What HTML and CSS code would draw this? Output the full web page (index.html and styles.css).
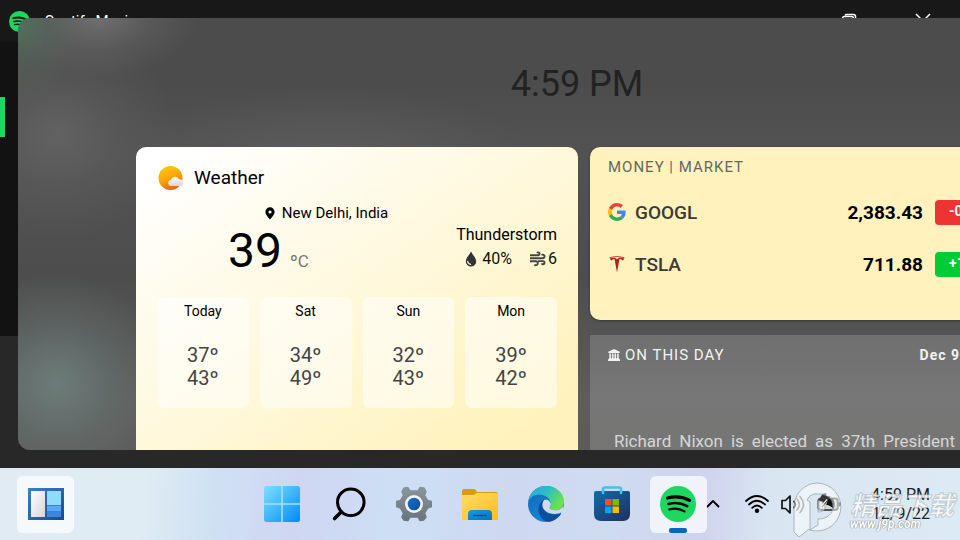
FILE: index.html
```html
<!DOCTYPE html>
<html lang="en">
<head>
<meta charset="utf-8">
<title>Widgets</title>
<link rel="stylesheet" href="styles.css">
</head>
<body>
<div class="desktop">
  <section class="app">
    <header class="app-title">
      <svg class="app-logo" viewBox="0 0 36 36"><circle cx="18" cy="18" r="18" fill="#1ed760"/><g fill="none" stroke="#121212" stroke-linecap="round"><path d="M7.5 12.2c7-1.9 15.500-1.200 22 2.400" stroke-width="3.400"/><path d="M8.500 18c6-1.600 13-.9 18.700 2.300" stroke-width="2.800"/><path d="M9.300 23.500c5-1.300 10.500-.7 15.200 2" stroke-width="2.300"/></g></svg>
      <span class="app-name">Spotify Music</span>
      <svg class="win-icon" viewBox="0 0 16 16"><rect x="1.500" y="3.500" width="11" height="11" rx="2"/><path d="M4 2.500Q4.500 1.500 6 1.500h6.500q2 0 2 2V10q0 1.500-1 2"/></svg>
      <svg class="win-icon" viewBox="0 0 16 16"><path d="M1 1l14 14M15 1L1 15"/></svg>
    </header>
    <div class="app-side"><i class="marker"></i></div>
    <div class="app-player"></div>
  </section>

  <main class="panel">
    <div class="board">
      <div class="time">4:59 PM</div>
      <div class="cards">
        <article class="weather">
          <header class="weather-head">
            <svg class="sun" viewBox="0 0 26 26"><defs><linearGradient id="sun" x1="0.3" y1="0" x2="0.7" y2="1"><stop offset="0" stop-color="#ffc80a"/><stop offset="0.5" stop-color="#fba40d"/><stop offset="1" stop-color="#e8590c"/></linearGradient><linearGradient id="cloud" x1="0" y1="0" x2="0" y2="1"><stop offset="0" stop-color="#fbfbfb"/><stop offset="1" stop-color="#d5d8dc"/></linearGradient></defs><circle cx="12.500" cy="13" r="12" fill="url(#sun)"/><path d="M13.500 21a3 3 0 0 1-.5-6q.8-3 4-3.200 2.800 0 4 2.500a3.300 3.300 0 0 1 1.500 6.700z" fill="url(#cloud)"/></svg>
            <h2>Weather</h2>
          </header>
          <p class="place"><svg class="pin" viewBox="0 0 10 13"><path fill-rule="evenodd" d="M5 .3A4.600 4.600 0 0 1 9.600 5C9.600 7.500 7.500 9.500 5 12.500 2.500 9.500.4 7.500.4 5A4.600 4.600 0 0 1 5 .3zM5 3.400a1.600 1.600 0 1 0 0 3.200 1.600 1.600 0 0 0 0-3.200z"/></svg>New Delhi, India</p>
          <div class="now">
            <div class="temp">39<span class="unit">ºC</span></div>
            <div class="state">
              <p>Thunderstorm</p>
              <p class="air">
                <svg class="drop" viewBox="0 0 12 16"><path d="M6 .6C7.500 4 11.200 6.800 11.200 10.400a5.200 5.200 0 0 1-10.400 0C.8 6.800 4.500 4 6 .6z" fill="#333"/><path d="M2.600 10.300q.3 2.800 3 3" fill="none" stroke="#fff6d8" stroke-width="1.200" stroke-linecap="round"/></svg>40%
                <svg class="wind" viewBox="0 0 16 16"><g fill="none" stroke="#444" stroke-width="1.900"><path d="M0 4.200h8.300a1.400 1.400 0 1 0-1.300-2.200"/><path d="M0 7.200h13a1.800 1.800 0 1 0-1.500-3.100"/><path d="M0 10.200h6a2 2 0 1 1-1.600 3.400"/><path d="M8 10.100h5a1.600 1.600 0 1 1-1.500 2.300"/></g></svg>6
              </p>
            </div>
          </div>
          <ul class="days">
            <li><b>Today</b><span>37º</span><span>43º</span></li>
            <li><b>Sat</b><span>34º</span><span>49º</span></li>
            <li><b>Sun</b><span>32º</span><span>43º</span></li>
            <li><b>Mon</b><span>39º</span><span>42º</span></li>
          </ul>
        </article>

        <div class="column">
          <article class="market">
            <h2 class="label">MONEY | MARKET</h2>
            <div class="stock">
              <svg class="brand" viewBox="0 0 48 48"><path fill="#ea4335" d="M24 9.500c3.540 0 6.710 1.220 9.210 3.600l6.850-6.850C35.900 2.380 30.470 0 24 0 14.620 0 6.510 5.380 2.560 13.220l7.980 6.190C12.430 13.720 17.740 9.500 24 9.500z"/><path fill="#4285f4" d="M46.980 24.550c0-1.570-.15-3.090-.38-4.550H24v9.020h12.940c-.58 2.960-2.260 5.480-4.780 7.180l7.730 6c4.510-4.180 7.090-10.360 7.090-17.650z"/><path fill="#fbbc05" d="M10.530 28.590a14.500 14.500 0 0 1 0-9.180l-7.980-6.190a24 24 0 0 0 0 21.560l7.980-6.190z"/><path fill="#34a853" d="M24 48c6.480 0 11.930-2.130 15.890-5.810l-7.730-6c-2.150 1.450-4.920 2.300-8.160 2.300-6.260 0-11.570-4.220-13.470-9.910l-7.980 6.190C6.510 42.620 14.620 48 24 48z"/></svg>
              <span class="ticker">GOOGL</span><span class="price">2,383.43</span><span class="chip down">-0</span>
            </div>
            <div class="stock">
              <svg class="brand" viewBox="0 0 18 18"><path fill="#b3231b" d="M1.500 2.300Q9 .2 16.500 2.300l-.3.700Q9 1.200 1.800 3zM1.700 3.600Q4 2.500 7 2.800L9 4.300l2-1.500q3-.3 5.300.8-.6 1.600-2 1.800-.8-1.300-2.800-1.300L9 17.500 6.500 4.100q-2 0-2.800 1.300-1.400-.2-2-1.800z"/></svg>
              <span class="ticker">TSLA</span><span class="price">711.88</span><span class="chip up">+1</span>
            </div>
          </article>
          <article class="history">
            <header class="history-head">
              <svg class="museum" viewBox="0 0 12 12"><path fill="#f2f2f2" d="M6 0l5.700 2.700v1.200H.3V2.700zM1.300 4.500h1.600v4.800H1.300zM3.900 4.500h1.600v4.800H3.900zM6.500 4.500h1.600v4.800H6.500zM9.100 4.500h1.600v4.800H9.100zM.8 9.300h10.400v1H.8zM0 10.300h12V12H0z"/></svg>
              <h2 class="label">ON THIS DAY</h2><span class="date">Dec 9</span>
            </header>
            <p class="event">Richard Nixon is elected as 37th President</p>
          </article>
        </div>
      </div>
    </div>
  </main>
</div>

<footer class="taskbar">
  <button class="task active" aria-label="Widgets"><svg viewBox="0 0 36 36"><defs><linearGradient id="wf" x1="0" y1="0" x2="1" y2="1"><stop offset="0" stop-color="#3b7fc9"/><stop offset="1" stop-color="#1b4a8f"/></linearGradient><linearGradient id="wl" x1="0" y1="0" x2="1" y2="1"><stop offset="0" stop-color="#fff"/><stop offset="1" stop-color="#d5d5da"/></linearGradient></defs><path d="M0 2h36v32H0z" fill="url(#wf)"/><path d="M3 5h14v26H3z" fill="url(#wl)"/><path d="M19 5h14v14H19z" fill="#8fdcfa"/><path d="M19 19h14v6H19z" fill="#55aaf3"/><path d="M19 25h14v6H19z" fill="#3c86dc"/><path d="M19 19.500h14M19 25.500h14" stroke="#3a84cf"/></svg></button>
  <nav class="apps">
    <button class="task" aria-label="Start"><svg viewBox="0 0 36 36"><defs><linearGradient id="st" gradientUnits="userSpaceOnUse" x1="0" y1="0" x2="36" y2="36"><stop offset="0" stop-color="#7fe0ff"/><stop offset="1" stop-color="#008af7"/></linearGradient></defs><rect width="36" height="36" rx="2.500" fill="url(#st)"/><path d="M18 0v36M0 18h36" stroke="#a5e0fb" stroke-width="1.600"/></svg></button>
    <button class="task" aria-label="Search"><svg viewBox="0 0 36 36"><g fill="none" stroke="#000" stroke-width="3"><circle cx="20.800" cy="16.300" r="13.300"/><path d="M11.400 25.700L4.600 32.500" stroke-width="3.600" stroke-linecap="round"/></g></svg></button>
    <button class="task" aria-label="Settings"><svg viewBox="0 0 36 36"><defs><linearGradient id="gr" x1="0" y1="0" x2="0" y2="1"><stop offset="0" stop-color="#8a949b"/><stop offset="1" stop-color="#6a747c"/></linearGradient><linearGradient id="gb" x1="0" y1="0" x2="1" y2="1"><stop offset="0" stop-color="#1b72c8"/><stop offset="1" stop-color="#0a4c9c"/></linearGradient></defs><path fill="url(#gr)" stroke="url(#gr)" stroke-width="1.500" stroke-linejoin="round" d="M8 2l4-.5 2 3.500h8l2-3.500 4 .5 2 3.500-1.500 4 3 5 4 1 .2 5-4.200 1.500-3 5 1.500 4-2.500 3-3.500.5-2-3.500h-8l-2 3.500-4-.5-2-3 1.500-4-3-5L.5 20.500v-5l4-1 3-5L6 5.500z"/><circle cx="18" cy="18" r="9" fill="#f1f2f4"/><circle cx="18" cy="18" r="6.300" fill="url(#gb)"/></svg></button>
    <button class="task" aria-label="Files"><svg viewBox="0 0 36 36"><defs><linearGradient id="fo" x1="0" y1="0" x2="1" y2="1"><stop offset="0" stop-color="#ffdc62"/><stop offset="1" stop-color="#fdbc22"/></linearGradient><linearGradient id="fb" x1="0" y1="0" x2="1" y2="1"><stop offset="0" stop-color="#139be0"/><stop offset="1" stop-color="#0b70c4"/></linearGradient></defs><path fill="#d99b12" d="M2 3h10q2 0 3 3h19q2 0 2 2v6H0V5q0-2 2-2z"/><path fill="url(#fo)" d="M0 9h11q2 0 3.500-2H34.500Q36 7 36 8.500V34H0z"/><path fill="url(#fb)" d="M6 34v-6q0-4 4-4h16q4 0 4 4v6z"/><path d="M11 29.500h14" stroke="#064b86" stroke-width="1.200"/></svg></button>
    <button class="task" aria-label="Edge"><svg viewBox="0 0 36 36"><defs><linearGradient id="e1" x1="0" y1="0" x2="1" y2="0.500"><stop offset="0" stop-color="#2aa5e0"/><stop offset="0.500" stop-color="#29bfc5"/><stop offset="1" stop-color="#6ee04c"/></linearGradient><linearGradient id="e2" x1="0" y1="0" x2="0.600" y2="1"><stop offset="0" stop-color="#1666b0"/><stop offset="1" stop-color="#128ade"/></linearGradient></defs><circle cx="18" cy="18" r="18" fill="url(#e2)"/><path fill="url(#e1)" d="M0 17C1 7 8.500 0 18 0c10.500 0 18 7.500 18 15.500 0 5.500-4 8.800-8.500 8.800-4 0-6-1.400-6-2.600 0-.9 1.200-1.500 1.200-3.800C22.700 12 17 8.500 11 8.500 5.500 8.500 1.500 12 0 17z"/><path fill="#0c509c" d="M16.500 13.800C11.500 16 10 20.500 10.500 24.500 11.300 31 16 36 21 35.800c5-.7 10-4.300 12.200-8.800-7 3.500-18 .5-18.800-7.500-.1-2.200.8-4.500 2.100-5.700z"/><path fill="#d0daf2" d="M16.500 13.800c3-.8 6.200 1.500 6.200 4.100 0 2.300-1.200 2.900-1.200 3.800 0 1.200 2 2.600 6 2.600 3.500 0 6.300-1.700 7.800-4.500L36 27l-2.800 2-.2-2.500C26 30 15.200 27 14.400 19.500c-.1-2.200.8-4.500 2.100-5.700z"/></svg></button>
    <button class="task" aria-label="Store"><svg viewBox="0 0 36 36"><defs><linearGradient id="so" x1="0" y1="0" x2="1" y2="1"><stop offset="0" stop-color="#0f6cae"/><stop offset="1" stop-color="#202f5c"/></linearGradient></defs><path d="M9 7V3.500Q9 1.500 11 1.500h14q2 0 2 2V7" fill="none" stroke="#48bdf0" stroke-width="2.600"/><path fill="url(#so)" d="M2 5h32q2 0 2 2v21q0 7-7 7H7q-7 0-7-7V7q0-2 2-2z"/><path fill="#f25022" d="M11 13h6.500v6.500H11z"/><path fill="#7fba00" d="M18.500 13H25v6.500h-6.500z"/><path fill="#00a4ef" d="M11 20.500h6.500V27H11z"/><path fill="#ffb900" d="M18.500 20.500H25V27h-6.500z"/><path d="M9 5v2M27 5v2" stroke="#48bdf0" stroke-width="2.600" stroke-linecap="round"/></svg></button>
    <button class="task active running" aria-label="Spotify"><svg viewBox="0 0 36 36"><circle cx="18" cy="18" r="18" fill="#1ed760"/><g fill="none" stroke="#000" stroke-linecap="round"><path d="M7.500 12c7-1.900 15.500-1.200 22 2.400" stroke-width="3.200"/><path d="M8.500 17.900c6-1.600 13-.9 18.700 2.300" stroke-width="2.600"/><path d="M9.300 23.400c5-1.300 10.500-.7 15.200 2" stroke-width="2.200"/></g></svg></button>
  </nav>
  <div class="tray">
    <button class="tray-button" aria-label="Show hidden icons"><svg class="chevron" viewBox="0 0 14 24"><path d="M1.500 14.500L7 9l5.500 5.500" fill="none" stroke="#000" stroke-width="1.800" stroke-linecap="round" stroke-linejoin="round"/></svg></button>
    <div class="status">
      <svg viewBox="0 0 24 24"><g fill="none" stroke="#000" stroke-width="1.800" stroke-linecap="round"><path d="M1 9q11-10 22 0M4 12.500q8-7.500 16 0M7.200 15.800q4.800-4.500 9.600 0"/></g><circle cx="12" cy="18.700" r="2.200"/></svg>
      <svg viewBox="0 0 24 24"><g fill="none" stroke="#111" stroke-width="1.700" stroke-linejoin="round" stroke-linecap="round"><path d="M1 8.500h3.500L9 4v17l-4.500-4.500H1z"/><path d="M13 9.500q2.500 3 0 6"/><path d="M16 7q4.500 5.500 0 11M19 4.500q7 8 0 16" stroke="#777"/></g></svg>
      <svg viewBox="0 0 26 24"><rect x="1.500" y="6" width="21" height="12.500" rx="3" fill="#d3dadd" stroke="#555" stroke-width="2.200"/><path d="M23.500 10h1q1.500 0 1.500 2.200t-1.500 2.300h-1z" fill="#333"/><path d="M12 6h5q4 6 1 12-3-5-8-5z" fill="#111"/><path d="M6 1l4-1v3l5 1-6 8-4 4 1-6-4-2z" fill="#333"/><path d="M4 15l7-8" stroke="#e5eaec" stroke-width="1.500"/></svg>
    </div>
    <div class="clock"><span>4:59 PM</span><span>12/9/22</span></div>
  </div>
  <div class="watermark">
    <svg viewBox="0 0 50 56"><path fill-rule="evenodd" d="M25 1a24 24 0 1 1-8.500 46.500L7 55l-5-5V25A24 24 0 0 1 25 1zM22 12q-5 1-7 6l3 2v28l8-5V37c9 0 15-5 15-13S34 11 22 12zM26 19c5 0 7 2 7 5.500S31 30 26 30z" fill="#fff" fill-opacity=".5" stroke="#8c979d" stroke-opacity=".65"/></svg>
    <div class="mark-text"><span class="mark-name" lang="zh">精品下载</span><span class="mark-url">www.j9p.com</span></div>
  </div>
</footer>
</body>
</html>
```
FILE: styles.css
```css
* { box-sizing: border-box; }
body {
  margin: 0;
  height: 100vh;
  display: flex;
  flex-direction: column;
  overflow: hidden;
  font-family: Roboto, "Liberation Sans", sans-serif;
  color: #000;
}
h2, p, ul { margin: 0; padding: 0; font-weight: 400; }
svg { display: block; flex: none; }
button { border: 0; padding: 0; background: none; }

.desktop { flex: 1; position: relative; min-height: 0; overflow: hidden; }

/* Application window behind the panel */
.app { height: 100%; display: flex; flex-direction: column; background: #121212; }
.app-title {
  height: 42px;
  display: flex;
  align-items: center;
  padding: 0 29px 0 9px;
  background: #181818;
  color: #fff;
}
.app-logo { width: 21px; height: 21px; }
.app-name { flex: 1; margin-left: 15px; font-size: 15px; }
.win-icon { width: 16px; height: 16px; margin-left: 58px; fill: none; stroke: #fff; stroke-width: 1.5; }
.app-side { flex: 1; padding-top: 55px; }
.marker { display: block; width: 5px; height: 40px; background: #1ed760; }
.app-player { height: 132px; background: #282828; }

/* Widget panel */
.panel {
  position: absolute;
  inset: 18px 0 18px 18px;
  overflow: hidden;
  border-radius: 12px 0 0 12px;
  background:
    radial-gradient(60px 80px at 0 5px, rgba(85, 125, 98, .7) 0%, rgba(85, 125, 98, .25) 50%, rgba(85, 125, 98, 0) 100%),
    radial-gradient(100px 60px at 80px 0, rgba(120, 120, 120, .8) 0%, rgba(120, 120, 120, .25) 55%, rgba(120, 120, 120, 0) 100%),
    radial-gradient(120px 110px at 39px 115px, rgba(102, 102, 102, .8) 0%, rgba(102, 102, 102, .3) 50%, rgba(102, 102, 102, 0) 100%),
    radial-gradient(110px 110px at 39px 365px, rgba(110, 128, 125, .9) 0%, rgba(110, 128, 125, .35) 50%, rgba(110, 128, 125, 0) 100%),
    radial-gradient(200px 60px at 310px 130px, rgba(100, 100, 100, .5) 0%, rgba(100, 100, 100, 0) 100%),
    linear-gradient(#4c4c4c 0%, #4c4c4c 15%, #515251 30%, #4d4d4d 60%, #5c5d5c 88%, #5b5b5a 100%);
}
.board { min-width: 1118px; padding: 44px 118px 0; }
.time { text-align: center; font-size: 36px; line-height: 44px; color: #222; }
.cards {
  display: grid;
  grid-template-columns: 442px 1fr;
  gap: 12px;
  margin-top: 41px;
}
.weather {
  min-height: 340px;
  padding: 18px 21px;
  border-radius: 10px;
  background: linear-gradient(145deg, #fff 5%, #fff2bc 85%);
}
.weather-head { display: flex; align-items: center; gap: 10px; }
.weather-head h2 { font-size: 19px; line-height: 26px; }
.sun { width: 26px; height: 26px; margin-left: 1px; }
.place {
  display: flex;
  align-items: center;
  justify-content: center;
  gap: 7px;
  margin-top: 12px;
  padding-right: 61px;
  font-size: 15px;
  line-height: 20px;
}
.pin { width: 10px; height: 13px; }
.now { display: flex; justify-content: space-between; padding-left: 71px; }
.temp { font-size: 48px; line-height: 56px; }
.unit { margin-left: 8px; font-size: 17px; color: #777; }
.state { font-size: 16px; line-height: 24px; }
.air { display: flex; align-items: center; justify-content: flex-end; color: #111; }
.drop { width: 12px; height: 16px; margin-right: 5px; }
.wind { width: 16px; height: 16px; margin: 0 2px 0 18px; }
.days {
  display: grid;
  grid-template-columns: repeat(4, 1fr);
  gap: 11px;
  margin-top: 8px;
  list-style: none;
}
.days li {
  display: flex;
  flex-direction: column;
  align-items: center;
  height: 111px;
  padding-top: 4px;
  border-radius: 6px;
  background: rgba(255, 255, 255, .5);
}
.days b { margin-bottom: 23px; font-size: 14px; line-height: 20px; font-weight: 400; }
.days span { font-size: 20px; line-height: 23px; color: #444; }

.column { display: flex; flex-direction: column; gap: 15px; }
.market {
  height: 173px;
  padding: 10px 18px;
  border-radius: 10px;
  background: #fff2bd;
  box-shadow: 0 1px 3px rgba(0, 0, 0, .3);
}
.label { font-size: 15px; line-height: 20px; letter-spacing: 1px; color: #666; }
.stock {
  display: grid;
  grid-template-columns: 18px 84px 195px 1fr;
  column-gap: 9px;
  align-items: center;
  height: 26px;
  margin-top: 22px;
}
.stock + .stock { margin-top: 26px; }
.brand { width: 18px; height: 18px; }
.ticker { font-size: 19px; font-weight: 500; color: #3c3c36; }
.price { text-align: right; font-size: 19px; font-weight: 700; }
.chip {
  height: 25px;
  margin-left: 3px;
  padding-left: 14px;
  border-radius: 4px;
  color: #fff;
  font-size: 14px;
  font-weight: 700;
  line-height: 22px;
}
.down { background: #e33; }
.up { background: #0c3; }

.history {
  min-height: 150px;
  padding: 10px 18px;
  background: rgba(255, 255, 255, .16);
  color: #f2f2f2;
}
.history-head { display: flex; align-items: center; }
.history-head .label { margin-left: 5px; color: #f2f2f2; }
.museum { width: 12px; height: 12px; }
.date { margin-left: 195px; font-size: 14px; font-weight: 700; letter-spacing: 1px; }
.event {
  width: 341px;
  margin: 65px 0 0 6px;
  font-size: 17px;
  line-height: 22px;
  text-align: justify;
  text-align-last: justify;
  color: #d6d6d6;
}

/* Taskbar */
.taskbar {
  position: relative;
  height: 72px;
  display: grid;
  grid-template-columns: minmax(0, 1fr) auto minmax(0, 1fr);
  align-items: center;
  background: linear-gradient(95deg, #e1ebf4 0%, #dfecf3 15%, #d0e1f3 22%, #cfd6f2 31%, #cddff5 42%, #ced8f0 54%, #cfdcf0 63%, #cfd3ee 73%, #d9e6f2 80%, #dceaf4 100%);
}
.task {
  position: relative;
  width: 57px;
  height: 57px;
  display: grid;
  place-items: center;
  border-radius: 6px;
}
.task svg { width: 36px; height: 36px; }
.taskbar > .task { margin-left: 17px; }
.active { background: rgba(255, 255, 255, .7); }
.running::after {
  content: "";
  position: absolute;
  bottom: 0;
  left: 19px;
  width: 18px;
  height: 5px;
  border-radius: 2px;
  background: #0a66bd;
}
.apps { display: flex; gap: 9px; }
.tray { display: flex; align-items: center; justify-content: flex-end; margin-right: 30px; }
.chevron { width: 14px; height: 24px; }
.status { display: flex; gap: 12px; margin: 0 30px 0 25px; }
.status svg { width: 24px; height: 24px; }
.clock {
  display: flex;
  flex-direction: column;
  align-items: flex-end;
  font-size: 16px;
  line-height: 19px;
  white-space: nowrap;
  color: #222;
}
.watermark {
  position: absolute;
  right: 6px;
  bottom: 2px;
  display: flex;
  align-items: center;
  gap: 8px;
  pointer-events: none;
}
.watermark svg { width: 50px; height: 56px; }
.mark-text { display: flex; flex-direction: column; font-style: italic; color: rgba(255, 255, 255, .75); }
.mark-name {
  font: italic 700 26px/28px "Noto Sans CJK SC", sans-serif;
  -webkit-text-stroke: 1px rgba(130, 140, 145, .4);
}
.mark-url {
  font-size: 12px;
  line-height: 12px;
  font-weight: 700;
  color: #fff;
  text-shadow: 0 0 1px #777, 0 0 1px #777;
}
```
